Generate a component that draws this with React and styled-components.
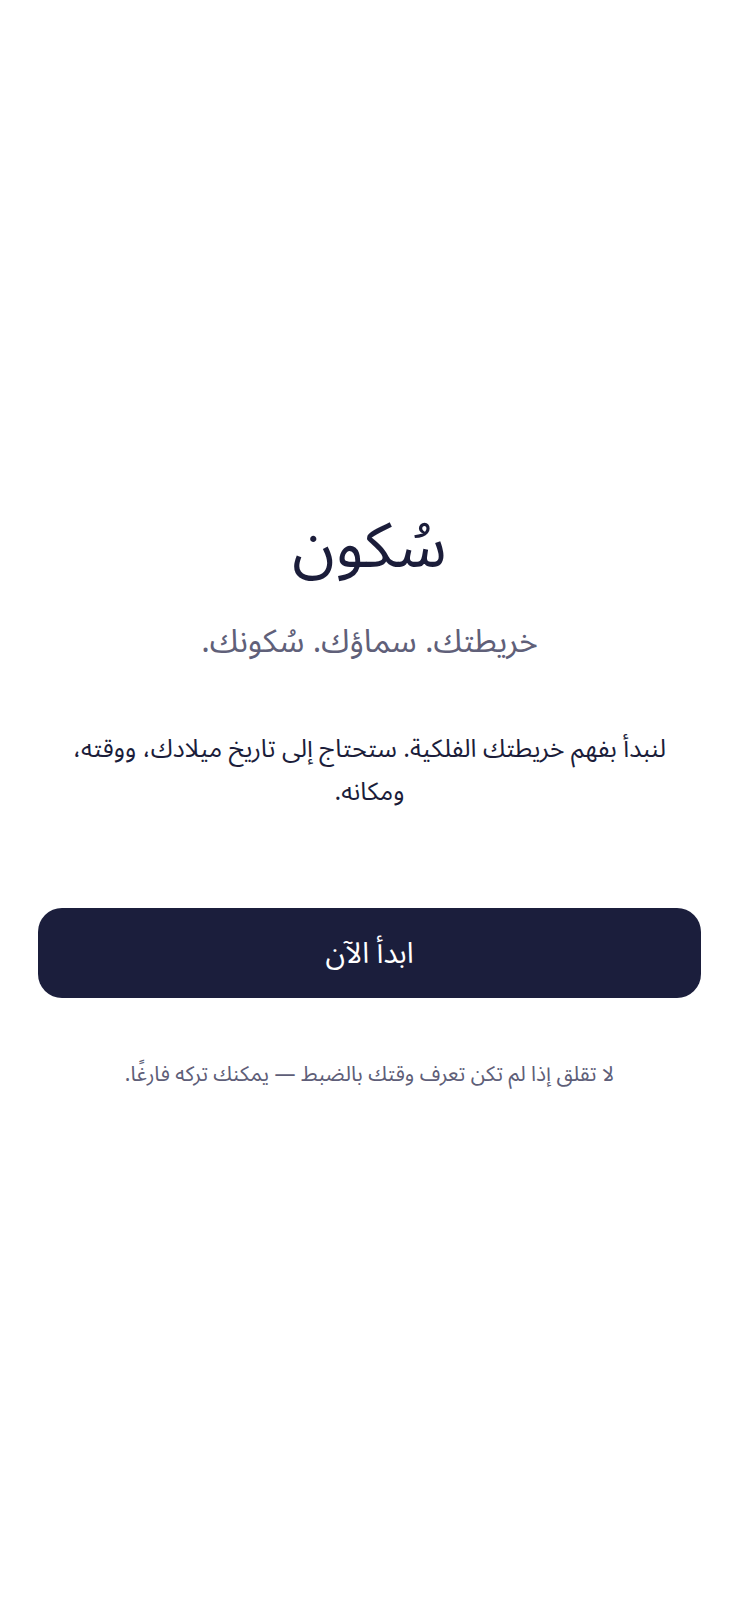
import React from "react";

// style
import styled, { createGlobalStyle } from "styled-components";

const GlobalStyle = createGlobalStyle`
  html, body {
    margin: 0;
    padding: 0;
    background: #ffffff;
  }
  body {
    font-family: "Noto Sans Arabic", "Noto Sans", "DejaVu Sans", sans-serif;
  }
`;

const App = () => {
  return (
    <React.Fragment>
      <GlobalStyle />
      <Page dir="rtl">
        <Content>
          <Title>سُكون</Title>
          <Tagline>خريطتك. سماؤك. سُكونك.</Tagline>
          <Intro>
            لنبدأ بفهم خريطتك الفلكية. ستحتاج إلى تاريخ ميلادك، ووقته، ومكانه.
          </Intro>
          <StartButton type="button">ابدأ الآن</StartButton>
          <Note>لا تقلق إذا لم تكن تعرف وقتك بالضبط — يمكنك تركه فارغًا.</Note>
        </Content>
      </Page>
    </React.Fragment>
  );
};

const Page = styled.div`
  min-height: 100vh;
  display: flex;
  align-items: center;
  justify-content: center;
  padding: 0 38px;
  box-sizing: border-box;
`;

const Content = styled.div`
  width: 100%;
  display: flex;
  flex-direction: column;
  align-items: center;
  text-align: center;
  color: #1b1d3a;
`;

const Title = styled.h1`
  margin: 0;
  font-size: 63px;
  font-weight: 400;
  line-height: 1.2;
`;

const Tagline = styled.p`
  margin: 35px 0 0;
  font-size: 32px;
  line-height: 1.4;
  color: #606079;
`;

const Intro = styled.p`
  margin: 64px 0 0;
  padding: 0 18px;
  font-size: 25px;
  line-height: 43px;
  color: #1b1d3a;
`;

const StartButton = styled.button`
  margin-top: 94px;
  width: 100%;
  height: 90px;
  border: none;
  border-radius: 24px;
  background: #1b1e3c;
  color: #ffffff;
  font-family: inherit;
  font-size: 29px;
  cursor: pointer;
`;

const Note = styled.p`
  margin: 61px 0 0;
  font-size: 21px;
  line-height: 1.5;
  color: #5e5e78;
`;

export default App;
